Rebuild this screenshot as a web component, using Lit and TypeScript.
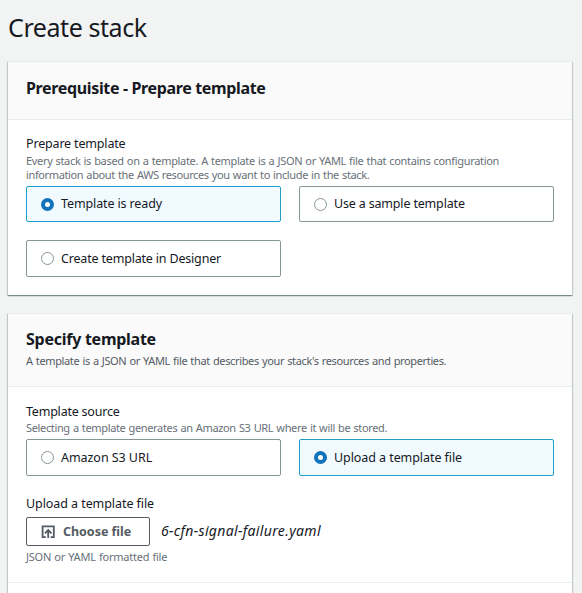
import { LitElement, html, css, svg } from "lit";
import { customElement, property } from "lit/decorators.js";
import { classMap } from "lit/directives/class-map.js";

const spaced = (text: string, tracking: number) =>
  html`<span style="letter-spacing:${tracking}px">${text}</span>`;

@customElement("option-tile")
class OptionTile extends LitElement {
  static styles = css`
    :host { display: block; }
    .tile {
      box-sizing: border-box;
      height: 100%;
      display: flex;
      align-items: center;
      gap: 7px;
      padding: 0 14px;
      border: 1px solid #879596;
      border-radius: 2px;
      background: #fff;
      color: #16191f;
      font-size: 12.5px;
      line-height: 18px;
      white-space: nowrap;
    }
    .selected { border-color: #1f9fc7; background: #f1faff; }
    .radio {
      box-sizing: border-box;
      flex: none;
      width: 13px;
      height: 13px;
      border: 1px solid #879596;
      border-radius: 50%;
      background: #fff;
    }
    .selected .radio { border: 4px solid #1173ba; }
  `;
  @property() label = "";
  @property({ type: Number }) tracking = 0;
  @property({ type: Boolean }) selected = false;

  render() {
    return html`<div class=${classMap({ tile: true, selected: this.selected })}>
      <span class="radio"></span>${spaced(this.label, this.tracking)}
    </div>`;
  }
}

const uploadIcon = svg`
  <path d="M4.8 12.2H1.6V1.4h11.2v10.8H9.6" />
  <path d="M7.2 13V5.2M3.9 8.3 7.2 5l3.3 3.3" />`;

@customElement("app-root")
class AppRoot extends LitElement {
  static styles = css`
    :host {
      display: block;
      box-sizing: border-box;
      height: 593px;
      overflow: hidden;
      padding: 11px 10px 0 8px;
      background: #f2f3f3;
      color: #16191f;
      font-family: "Noto Sans", "Open Sans", sans-serif;
    }
    h1, h2, p { margin: 0; }
    h1 { margin-bottom: 18px; font-size: 25px; line-height: 32px; font-weight: 400; }
    h2 { font-size: 16px; line-height: 20px; font-weight: 700; }
    .card {
      border-top: 1px solid #eaeded;
      background: #fff;
      margin-bottom: 18px;
      box-shadow: 0 1px 1px 0 rgba(0, 28, 36, 0.3), 1px 1px 1px 0 rgba(0, 28, 36, 0.15),
        -1px 1px 1px 0 rgba(0, 28, 36, 0.15);
    }
    .head { padding: 16px 18px 21px; border-bottom: 1px solid #eaeded; background: #fafafa; }
    .head.described { padding: 15px 18px 18px; }
    .body { padding: 15px 18px 18px; }
    .source { padding-top: 16px; }
    .label { font-size: 12.5px; line-height: 18px; white-space: nowrap; }
    .hint { font-size: 11px; line-height: 14px; color: #687078; white-space: nowrap; word-spacing: 0.6px; }
    .head .hint { margin-top: 5px; color: #545b64; }
    .label + .hint { margin-top: 1px; margin-bottom: 4px; }
    .source .label + .hint { margin-top: 0; }
    .tiles { display: grid; grid-template-columns: 1fr 1fr; grid-template-rows: 36px 37px; gap: 18px; }
    .tiles.single { grid-template-rows: 37px; margin-bottom: 19px; }
    .upload { display: flex; align-items: center; gap: 11px; margin: 4px 0; }
    .button {
      box-sizing: border-box;
      width: 124px;
      height: 29px;
      display: flex;
      align-items: center;
      gap: 8px;
      padding: 0 14px;
      border: 1px solid #545b64;
      border-radius: 2px;
      background: #fff;
      color: #545b64;
      font: 700 12.5px/18px "Noto Sans", sans-serif;
      white-space: nowrap;
    }
    .icon { flex: none; width: 14px; height: 14px; fill: none; stroke: #545b64; stroke-width: 1.8; }
    .file { font-size: 14px; line-height: 20px; font-style: italic; margin-top: -2px; }
    .rest { height: 40px; border-top: 1px solid #eaeded; }
  `;

  render() {
    return html`
      <h1>${spaced("Create stack", -0.42)}</h1>
      <section class="card">
        <div class="head"><h2>${spaced("Prerequisite - Prepare template", -0.35)}</h2></div>
        <div class="body">
          <div class="label">${spaced("Prepare template", -0.17)}</div>
          <div class="hint">
            ${spaced("Every stack is based on a template. A template is a JSON or YAML file that contains configuration", -0.33)}<br />
            ${spaced("information about the AWS resources you want to include in the stack.", -0.37)}
          </div>
          <div class="tiles">
            <option-tile label="Template is ready" tracking="-0.12" selected></option-tile>
            <option-tile label="Use a sample template" tracking="-0.17"></option-tile>
            <option-tile label="Create template in Designer" tracking="-0.18"></option-tile>
          </div>
        </div>
      </section>
      <section class="card">
        <div class="head described">
          <h2>${spaced("Specify template", -0.26)}</h2>
          <p class="hint">${spaced("A template is a JSON or YAML file that describes your stack's resources and properties.", -0.36)}</p>
        </div>
        <div class="body source">
          <div class="label">${spaced("Template source", -0.22)}</div>
          <div class="hint">${spaced("Selecting a template generates an Amazon S3 URL where it will be stored.", -0.35)}</div>
          <div class="tiles single">
            <option-tile label="Amazon S3 URL" tracking="-0.05"></option-tile>
            <option-tile label="Upload a template file" tracking="-0.07" selected></option-tile>
          </div>
          <div class="label">${spaced("Upload a template file", -0.07)}</div>
          <div class="upload">
            <button class="button">
              <svg class="icon" viewBox="0 0 14 14">${uploadIcon}</svg>${spaced("Choose file", -0.03)}
            </button>
            <span class="file">${spaced("6-cfn-signal-failure.yaml", 0.35)}</span>
          </div>
          <div class="hint">${spaced("JSON or YAML formatted file", -0.23)}</div>
        </div>
        <div class="rest"></div>
      </section>
    `;
  }
}
